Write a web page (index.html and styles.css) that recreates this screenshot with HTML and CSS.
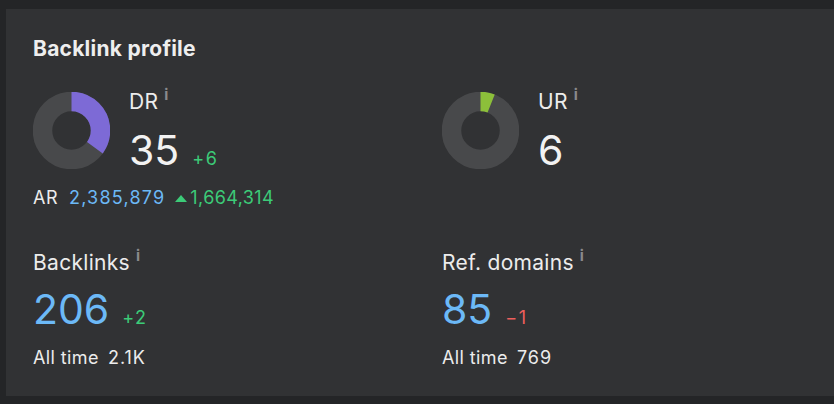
FILE: index.html
```html
<!DOCTYPE html>
<html lang="en">
<head>
<meta charset="utf-8">
<title>Backlink profile</title>
<link rel="stylesheet" href="styles.css">
</head>
<body>
<section class="card">
  <h2 class="title">Backlink profile</h2>
  <div class="grid">
    <div class="cell">
      <div class="metric">
        <svg class="donut" width="77" height="77" viewBox="0 0 77 77">
          <circle cx="38.5" cy="38.5" r="29" fill="none" stroke="#48494b" stroke-width="19.5"/>
          <circle cx="38.5" cy="38.5" r="29" fill="none" stroke="#7d6ad6" stroke-width="19.5" stroke-dasharray="63.8 200" transform="rotate(-90 38.5 38.5)"/>
        </svg>
        <div class="info">
          <div class="label">DR<span class="tip">i</span></div>
          <div class="value">35<span class="delta up">+6</span></div>
        </div>
      </div>
      <div class="ar"><span class="ar-label">AR</span><span class="ar-num">2,385,879</span><span class="ar-change"><span class="tri"></span>1,664,314</span></div>
    </div>
    <div class="cell">
      <div class="metric">
        <svg class="donut" width="77" height="77" viewBox="0 0 77 77">
          <circle cx="38.5" cy="38.5" r="29" fill="none" stroke="#48494b" stroke-width="19.5"/>
          <circle cx="38.5" cy="38.5" r="29" fill="none" stroke="#8cbf3a" stroke-width="19.5" stroke-dasharray="10.9 200" transform="rotate(-90 38.5 38.5)"/>
        </svg>
        <div class="info">
          <div class="label">UR<span class="tip">i</span></div>
          <div class="value">6</div>
        </div>
      </div>
    </div>
    <div class="cell">
      <div class="label">Backlinks<span class="tip">i</span></div>
      <div class="value big-blue">206<span class="delta up">+2</span></div>
      <div class="alltime">All time<span class="alltime-num">2.1K</span></div>
    </div>
    <div class="cell">
      <div class="label">Ref. domains<span class="tip">i</span></div>
      <div class="value big-blue">85<span class="delta down">&minus;1</span></div>
      <div class="alltime">All time<span class="alltime-num">769</span></div>
    </div>
  </div>
</section>
</body>
</html>
```

FILE: styles.css
```css
* { box-sizing: border-box; }

body {
  margin: 0;
  background: #242527;
  font-family: Inter, "Noto Sans", "Liberation Sans", sans-serif;
  color: #ededed;
  overflow: hidden;
}

.card {
  margin: 9px 0 0 6px;
  height: 387px;
  background: #313234;
  padding: 28px 0 0 27px;
}

.title {
  margin: 0;
  font-size: 21px;
  line-height: 24px;
  font-weight: 700;
  letter-spacing: 0.25px;
  color: #eeeeee;
}

.grid {
  margin-top: 31px;
  display: grid;
  grid-template-columns: 409px 1fr;
  row-gap: 45px;
}

.metric {
  display: flex;
  align-items: flex-start;
  gap: 19px;
}

.donut { display: block; flex: none; }

.label {
  font-size: 21px;
  line-height: 20px;
  letter-spacing: 0.3px;
  color: #ececec;
}

.tip {
  font-size: 15px;
  font-weight: 700;
  line-height: 0;
  color: #8a8a8c;
  margin-left: 6px;
  vertical-align: 9px;
}

.info .value { margin-top: 16px; }

.value {
  font-size: 41px;
  line-height: 44px;
  color: #f2f2f2;
  white-space: nowrap;
}

.cell > .value { margin-top: 14px; }

.big-blue { color: #6cb9f7; }

.delta {
  font-size: 18px;
  line-height: 1;
  letter-spacing: 1.5px;
  margin-left: 13px;
}

.up { color: #3ccb78; }
.down { color: #ec5f5c; }

.ar {
  margin-top: 16px;
  font-size: 18px;
  line-height: 20px;
  display: flex;
  align-items: baseline;
}

.ar-label { color: #ececec; letter-spacing: 0.5px; }
.ar-num { color: #6cb9f7; margin-left: 11px; letter-spacing: 1.2px; }

.ar-change {
  color: #3ccb78;
  margin-left: 10px;
  display: inline-flex;
  align-items: baseline;
  letter-spacing: 0.4px;
}

.tri {
  width: 0;
  height: 0;
  border-left: 6px solid transparent;
  border-right: 6px solid transparent;
  border-bottom: 7px solid #3ccb78;
  margin-right: 3px;
  position: relative;
  top: -2px;
}

.alltime {
  margin-top: 17px;
  font-size: 18px;
  line-height: 20px;
  letter-spacing: 0.4px;
  color: #ececec;
}

.alltime-num { margin-left: 9px; letter-spacing: 1px; }
```
